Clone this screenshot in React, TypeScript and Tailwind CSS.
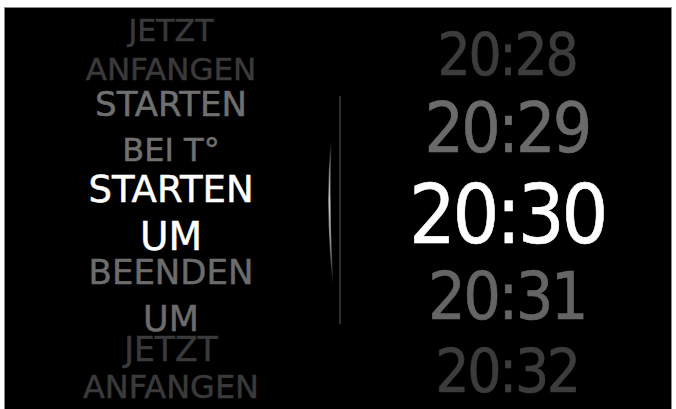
import React from "react";

const LEFT_FONT = "font-['DejaVu_Sans',sans-serif] [-webkit-text-stroke:0.5px]";
const RIGHT_FONT = "font-['DejaVu_Sans_Condensed','DejaVu_Sans',sans-serif] font-stretch-condensed [-webkit-text-stroke:0.6px]";

interface WheelItem {
  label: string;
  className: string;
}

// left wheel: modes, middle one selected
const modes: WheelItem[] = [
  { label: "JETZT", className: "mt-[11px] text-[30px] text-[#3a3a3a]" },
  { label: "ANFANGEN", className: "mt-[14px] text-[31px] text-[#3a3a3a]" },
  { label: "STARTEN", className: "mt-[9px] text-[34px] text-[#707070]" },
  { label: "BEI T°", className: "mt-[20px] text-[32px] text-[#707070]" },
  { label: "STARTEN", className: "mt-[11px] text-[37px] text-white" },
  { label: "UM", className: "mt-[17px] text-[39px] text-white" },
  { label: "BEENDEN", className: "mt-[7px] text-[34px] text-[#6c6c6c]" },
  { label: "UM", className: "mt-[18px] text-[35px] text-[#6c6c6c]" },
  { label: "JETZT", className: "mt-[4px] text-[33px] text-[#3a3a3a]" },
  { label: "ANFANGEN", className: "mt-[12px] text-[32px] text-[#3a3a3a]" },
];

// right wheel: times
const times: WheelItem[] = [
  { label: "20:28", className: "mt-[24px] text-[58px] text-[#3c3c3c]" },
  { label: "20:29", className: "mt-[23px] text-[69px] text-[#6a6a6a]" },
  { label: "20:30", className: "mt-[25px] text-[82px] text-white" },
  { label: "20:31", className: "mt-[24px] text-[66px] text-[#656565]" },
  { label: "20:32", className: "mt-[23px] text-[60px] text-[#3c3c3c]" },
];

const Divider = () => (
  <svg width="16" height="232" viewBox="0 0 16 232" className="mt-[88px]">
    <defs>
      <linearGradient id="glow" x1="0" y1="0" x2="0" y2="1">
        <stop offset="0" stopColor="#ffffff" stopOpacity="0" />
        <stop offset="0.45" stopColor="#d0d0d0" stopOpacity="0.8" />
        <stop offset="0.6" stopColor="#c0c0c0" stopOpacity="0.65" />
        <stop offset="1" stopColor="#ffffff" stopOpacity="0" />
      </linearGradient>
    </defs>
    <rect x="12" y="0" width="2" height="228" fill="#2e2e2e" />
    <path d="M4 44 Q-1 115 6 188 Q1 115 4 44 Z" fill="url(#glow)" stroke="url(#glow)" strokeWidth="1.2" />
  </svg>
);

export default function App() {
  return (
    <div className="w-[676px] h-[409px] bg-white overflow-hidden">
      <div className="mt-[7px] mx-[4px] h-[402px] bg-black border-t border-x border-[#8a8a8a] grid grid-cols-[322px_16px_1fr]">
        <div className={`flex flex-col items-center pl-[10px] ${LEFT_FONT}`}>
          {modes.map((m, i) => (
            <div key={i} className={`leading-[0.8] whitespace-nowrap ${m.className}`}>
              {m.label}
            </div>
          ))}
        </div>
        <Divider />
        <div className={`flex flex-col items-center ${RIGHT_FONT}`}>
          {times.map((t, i) => (
            <div key={i} className={`leading-[0.8] tracking-[-0.04em] whitespace-nowrap ${t.className}`}>
              {t.label}
            </div>
          ))}
        </div>
      </div>
    </div>
  );
}
